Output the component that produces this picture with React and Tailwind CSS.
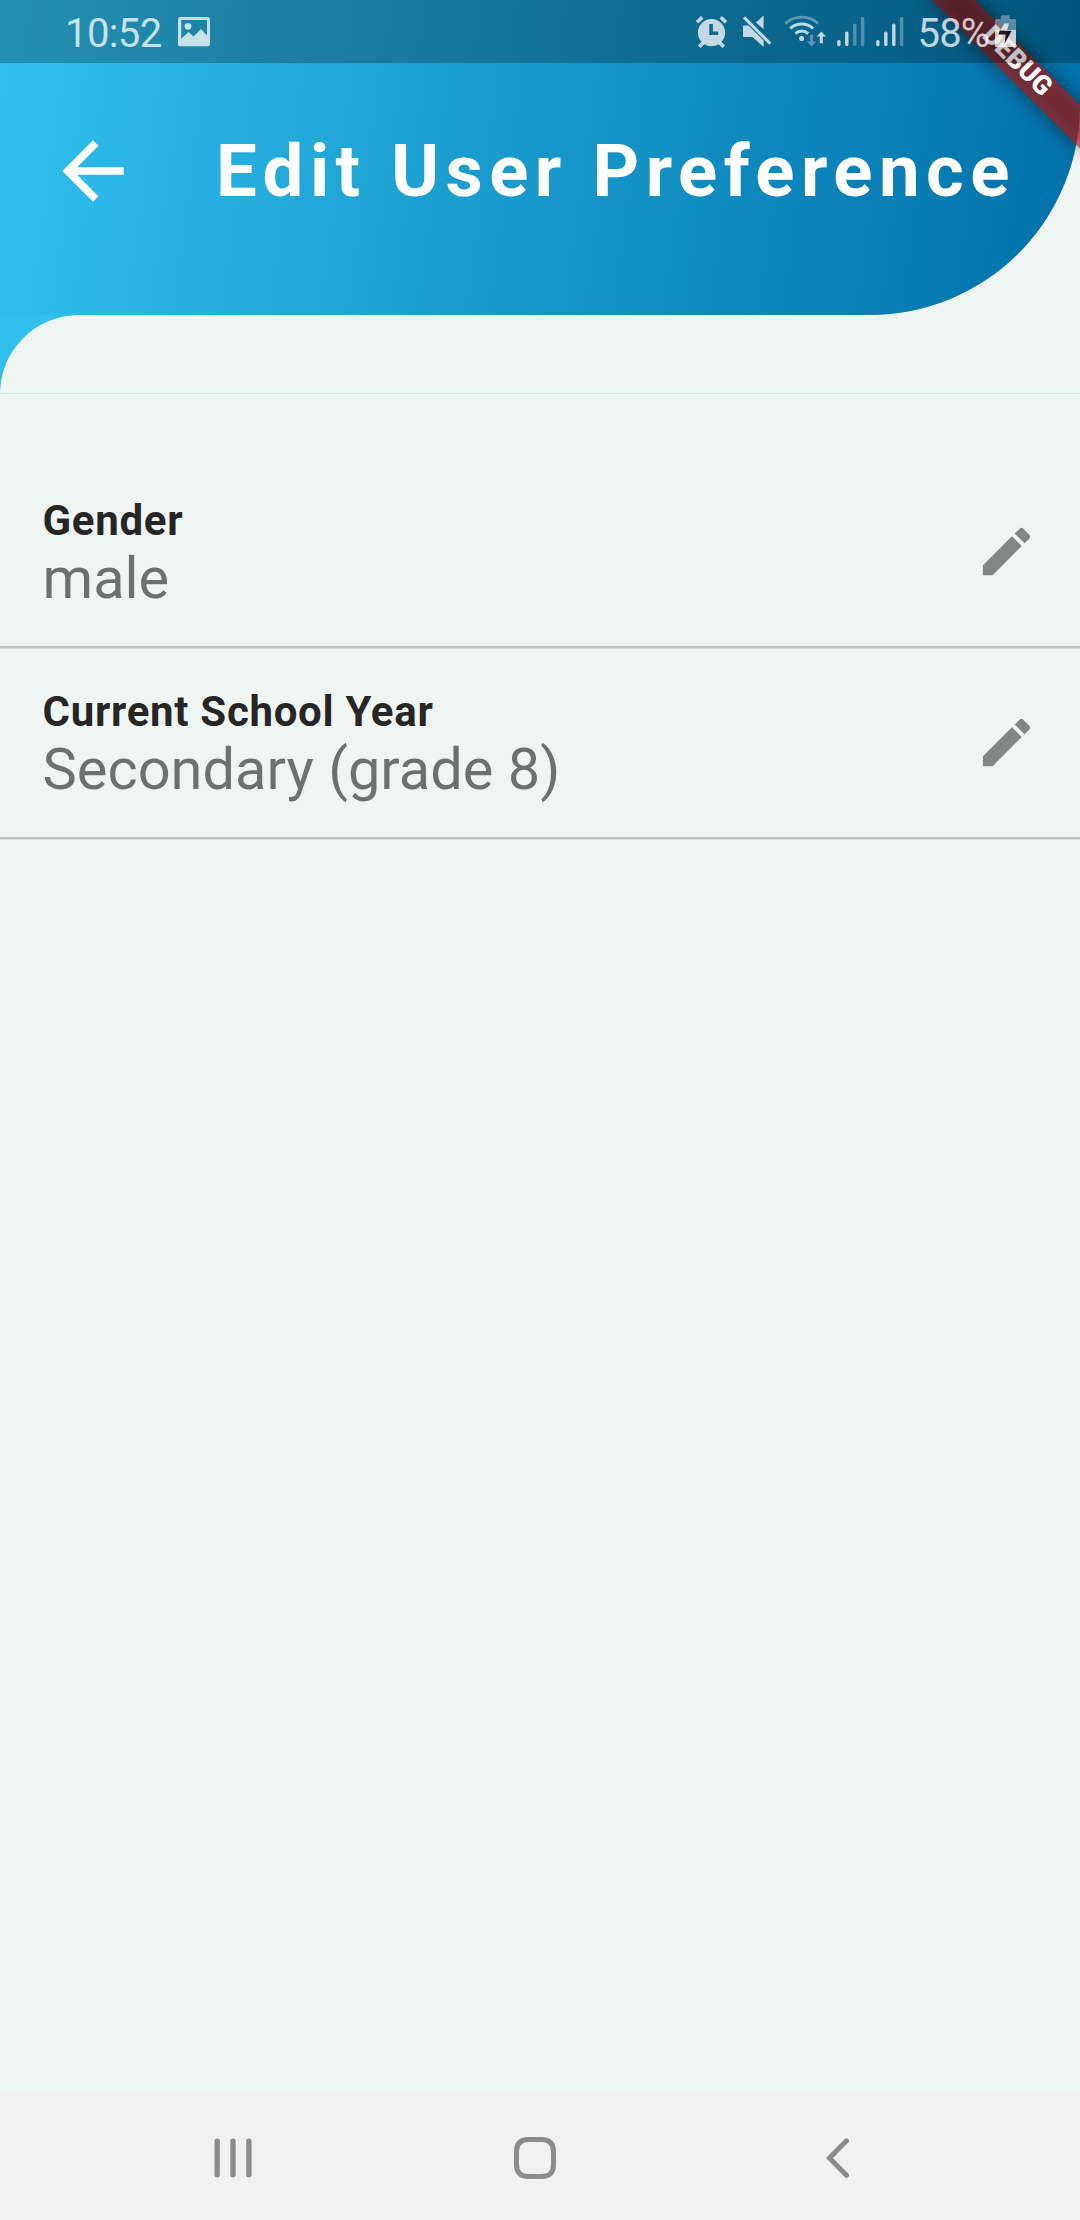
const AlarmIcon = () => (
  <svg className="h-[33px] w-[33px]" viewBox="0 0 33 33" fill="currentColor">
    <path
      fillRule="evenodd"
      d="M16.5 4a13.6 13.6 0 1 0 0 27.2a13.6 13.6 0 1 0 0-27.2zM14.3 9h3.6v7.6h5.3v3.5h-8.9z"
    />
    <path d="M2 7.2l5.2-4.8M31 7.2l-5.2-4.8M8.5 27.5l-4.3 4.3M24.5 27.5l4.3 4.3" stroke="currentColor" strokeWidth="3.6" />
  </svg>
);

const MuteIcon = () => (
  <svg className="h-[33px] w-[29px]" viewBox="0 0 29 33" fill="currentColor">
    <path d="M0 10.6h5.5L20.6 25.6V32L9.4 22H0z" />
    <path d="M13 7.6L20.6.6v13.6z" />
    <path d="M1 2.4L27.2 28.6" stroke="currentColor" strokeWidth="3" />
  </svg>
);

const WifiIcon = () => (
  <svg className="h-[33px] w-[43px]" viewBox="0 0 43 33" fill="none" stroke="currentColor">
    <path d="M1.2 8.6a24 24 0 0 1 33 0" strokeWidth="2.8" opacity=".45" />
    <path d="M6.2 13.5a17 17 0 0 1 23 0" strokeWidth="3" />
    <path d="M11.4 18.6a9.4 9.4 0 0 1 12.8 0" strokeWidth="3" />
    <circle cx="17.6" cy="23.4" r="2.5" fill="currentColor" stroke="none" />
    <path d="M26.1 20h3v6.5h3.2l-4.7 5-4.7-5h3.2z" fill="currentColor" stroke="none" opacity=".45" />
    <path d="M35.8 28.2h3v-6.6H42L37.3 16.6l-4.7 5h3.2z" fill="currentColor" stroke="none" />
  </svg>
);

const SignalIcon = ({ bars }) => (
  <svg className="h-[31px] w-[28px]" viewBox="0 0 28 31" stroke="currentColor" strokeWidth="3.4" strokeLinecap="round">
    <path d="M1.9 25.6v3" />
    <path d="M9.8 17.2v11.4" />
    <path d="M17.8 9.3v19.3" opacity={bars > 2 ? 1 : 0.4} />
    <path d="M25.6 2.4v26.2" opacity=".4" />
  </svg>
);

const BatteryIcon = () => (
  <svg className="h-[33px] w-[21px]" viewBox="0 0 21 33" fill="currentColor">
    <path d="M5.700 4V1.500Q5.700.2 7 .2h6.500Q14.800.2 14.800 1.500V4H19.500Q21 4 21 5.500V15H0V5.500Q0 4 1.500 4z" opacity=".45" />
    <path d="M0 15h21v15.500Q21 32 19.500 32h-18Q0 32 0 30.500z" />
    <path d="M9.500 8.500H14L12 15.500H5z" />
    <path d="M4.700 15.500L16.500 16 9.500 29l1.200-9.500H3.500z" fill="#1c1418" />
  </svg>
);

const PictureIcon = () => (
  <svg className="h-[30px] w-[32px]" viewBox="0 0 32 30" fill="currentColor">
    <path
      fillRule="evenodd"
      d="M2.5 0h27Q32 0 32 2.5v24.200q0 2.5-2.5 2.5h-27Q0 29.200 0 26.700V2.500Q0 0 2.500 0zM3.200 3v18.800L10.500 15l5 4.500L23 12l6 6.500V3z"
    />
    <circle cx="10" cy="9.300" r="3.400" />
  </svg>
);

function StatusBar() {
  return (
    <div className="absolute inset-x-0 top-0 flex h-[63px] items-start bg-black/25 text-[40px] leading-[47px] text-white/75">
      <span className="mt-[10px] ml-[65px] w-[98px] whitespace-nowrap tracking-[-0.6px]">10:52</span>
      <span className="mt-[17px] ml-[15px]"><PictureIcon /></span>
      <span className="mt-[15px] ml-[484.5px]"><AlarmIcon /></span>
      <span className="mt-[15px] ml-[15.5px]"><MuteIcon /></span>
      <span className="mt-[15px] ml-[12px]"><WifiIcon /></span>
      <span className="mt-[16px] ml-[9.5px]"><SignalIcon bars={2} /></span>
      <span className="mt-[16px] ml-[11px]"><SignalIcon bars={3} /></span>
      <span className="mt-[10px] ml-[14px] w-[77px] whitespace-nowrap tracking-[-0.8px]">58%</span>
      <span className="mt-[15px]"><BatteryIcon /></span>
    </div>
  );
}

function DebugBanner() {
  return (
    <div className="absolute top-0 right-0 size-0 rotate-45">
      <div className="absolute top-[73.5px] left-[-105px] h-[31.5px] w-[210px] bg-black/50 blur-[10px]" />
      <div className="absolute top-[73.5px] left-[-105px] flex h-[31.5px] w-[210px] items-center justify-center bg-[#b71c1c]/63 pr-[2px] pb-[4px] text-[26.8px] leading-none font-black text-white">
        DEBUG
      </div>
    </div>
  );
}

function Header() {
  return (
    <header className="flex h-[315px] items-start rounded-br-[210px] bg-[linear-gradient(98deg,#30c0ed,#0070a8)] text-white">
      <svg className="mt-[125px] ml-[47px] size-[92px] shrink-0" viewBox="0 0 24 24" fill="currentColor">
        <path d="M20 11H7.830l5.590-5.590L12 4l-8 8 8 8 1.410-1.410L7.830 13H20v-2z" />
      </svg>
      <h1 className="mt-[129px] ml-[77px] text-[72.5px] leading-[86px] font-bold tracking-[6.5px] whitespace-nowrap">
        Edit User Preference
      </h1>
    </header>
  );
}

function PreferenceRow({ label, value }) {
  return (
    <li className="mb-px flex h-[190px] items-start justify-between border-b-2 border-black/20 pr-[42px] pl-[42.5px] shadow-[0_1px_0_#d9dedc]">
      <div className="pt-[38px]">
        <div className="text-[42px] leading-[49px] font-bold tracking-[0.7px] text-black/87">{label}</div>
        <div className="mt-[-1px] text-[57.75px] leading-[68px] text-black/54">{value}</div>
      </div>
      <svg className="mt-[62px] size-[63px] fill-black/45" viewBox="0 0 24 24">
        <path d="M3 17.250V21h3.750L17.810 9.940l-3.750-3.750L3 17.250zM20.710 7.040c.39-.39.39-1.020 0-1.410l-2.340-2.340c-.39-.39-1.020-.39-1.410 0l-1.830 1.830 3.750 3.750 1.830-1.830z" />
      </svg>
    </li>
  );
}

function NavBar() {
  return (
    <nav className="flex h-[126px] items-center bg-[#f1f1f1] pt-[2px] text-[#8c8c8c]">
      <svg className="ml-[214px] h-[42px] w-[38px]" viewBox="0 0 38 42" stroke="currentColor" strokeWidth="5.4" strokeLinecap="round">
        <path d="M3.200 4.200v33.600M19 4.200v33.600M34.900 4.200v33.600" />
      </svg>
      <svg className="ml-[262px] size-[42px]" viewBox="0 0 42 42" fill="none" stroke="currentColor" strokeWidth="5">
        <path d="M14.500 2.500h13q12 0 12 12v13q0 12-12 12h-13q-12 0-12-12v-13q0-12 12-12z" />
      </svg>
      <svg className="ml-[270px] h-[42px] w-[24px]" viewBox="0 0 24 42" fill="none" stroke="currentColor" strokeWidth="5" strokeLinecap="round">
        <path d="M20.500 3.800L3.500 21l17 17.200" />
      </svg>
    </nav>
  );
}

export default function App() {
  return (
    <div className="relative flex h-[2220px] w-[1080px] flex-col overflow-hidden bg-[#eff5f3] font-['Roboto',sans-serif]">
      <Header />
      <div className="h-[79px] bg-[linear-gradient(90deg,#30bfec_50%,#eff5f3_50%)]">
        <div className="h-full rounded-tl-[79px] bg-[linear-gradient(#eff5f3_78px,#cfe8ea_78px)]" />
      </div>
      <ul className="grow pt-[64px]">
        <PreferenceRow label="Gender" value="male" />
        <PreferenceRow label="Current School Year" value="Secondary (grade 8)" />
      </ul>
      <NavBar />
      <DebugBanner />
      <StatusBar />
    </div>
  );
}
